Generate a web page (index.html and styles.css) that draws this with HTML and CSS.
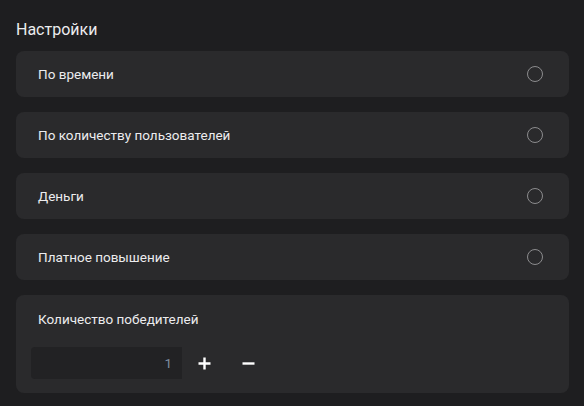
FILE: index.html
```html
<!DOCTYPE html>
<html lang="ru">
<head>
<meta charset="utf-8">
<link rel="stylesheet" href="styles.css">
</head>
<body>
<div class="page">
  <h2 class="title">Настройки</h2>
  <div class="list">
    <div class="card row"><span class="label">По времени</span><span class="radio"></span></div>
    <div class="card row"><span class="label">По количеству пользователей</span><span class="radio"></span></div>
    <div class="card row"><span class="label">Деньги</span><span class="radio"></span></div>
    <div class="card row"><span class="label">Платное повышение</span><span class="radio"></span></div>
    <div class="card block">
      <span class="label">Количество победителей</span>
      <div class="stepper">
        <div class="input">1</div>
        <button class="btn">
          <svg width="13" height="13" viewBox="0 0 13 13"><path d="M6.5 0.5v12M0.5 6.5h12" stroke="#fff" stroke-width="2.4"/></svg>
        </button>
        <button class="btn">
          <svg width="13" height="13" viewBox="0 0 13 13"><path d="M0.5 6.5h12" stroke="#fff" stroke-width="2.4"/></svg>
        </button>
      </div>
    </div>
  </div>
</div>
</body>
</html>
```
FILE: styles.css
```css
* { box-sizing: border-box; }
html, body { margin: 0; padding: 0; }
body {
  background: #1e1e20;
  font-family: Roboto, "Liberation Sans", sans-serif;
  color: #e8e8ea;
  width: 584px;
  height: 406px;
  overflow: hidden;
}
.page { padding: 20px 15px 0 16px; }
.title {
  margin: 0 0 11px 0;
  font-size: 16px;
  font-weight: 400;
  line-height: 20px;
  color: #ececee;
}
.list { display: flex; flex-direction: column; gap: 15px; }
.card {
  background: #2a2a2c;
  border-radius: 8px;
}
.row {
  height: 46px;
  display: flex;
  align-items: center;
  justify-content: space-between;
  padding: 0 26px 0 22px;
}
.label { font-size: 13.5px; color: #ececee; }
.radio {
  width: 16px;
  height: 16px;
  border: 1.5px solid #8c8c8e;
  border-radius: 50%;
}
.block {
  height: 98px;
  padding: 16px 15px 0 22px;
  display: flex;
  flex-direction: column;
}
.stepper {
  display: flex;
  align-items: center;
  margin-top: 20px;
  margin-left: -7px;
}
.input {
  width: 151px;
  height: 32px;
  background: #222224;
  border-radius: 4px 0 0 4px;
  text-align: right;
  padding-right: 10px;
  line-height: 32px;
  font-size: 13.5px;
  color: #7f8ea0;
}
.btn {
  background: none;
  border: 0;
  padding: 0;
  width: 44px;
  height: 32px;
  display: flex;
  align-items: center;
  justify-content: center;
}
```
